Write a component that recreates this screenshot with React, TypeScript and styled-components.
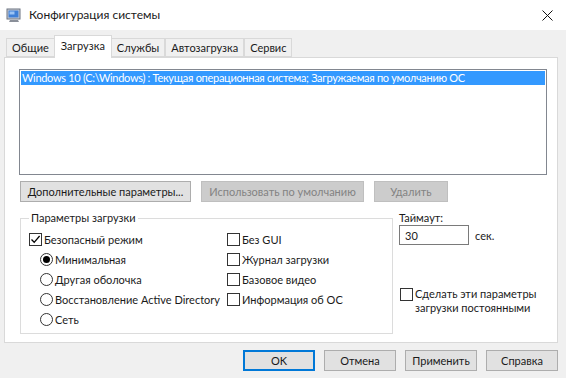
import React from "react";
import styled, { createGlobalStyle } from "styled-components";

const GlobalStyle = createGlobalStyle`
  html, body {
    margin: 0;
    padding: 0;
    background: #f0f0f0;
  }
  body {
    font-family: Lato, "Noto Sans", "Liberation Sans", sans-serif;
    font-size: 11px;
    color: #1a1a1a;
  }
  * {
    box-sizing: border-box;
  }
`;

const Window = styled.div`
  width: 566px;
  height: 378px;
  display: flex;
  flex-direction: column;
  background: #f0f0f0;
  overflow: hidden;
`;

const TitleBar = styled.div`
  height: 30px;
  background: #fff;
  display: flex;
  align-items: center;
  padding: 0 6px;
  gap: 7px;
`;

const Title = styled.div`
  flex: 1;
  font-size: 12px;
  padding-bottom: 2px;
`;

const CloseBox = styled.div`
  width: 30px;
  display: flex;
  justify-content: center;
  padding-left: 4px;
`;

const Body = styled.div`
  flex: 1;
  display: flex;
  flex-direction: column;
  padding: 5px 8px 0 4px;
`;

const Tabs = styled.div`
  display: flex;
  align-items: flex-end;
  height: 22px;
  padding-left: 2px;
  position: relative;
  z-index: 1;
`;

const Tab = styled.div<{ $active?: boolean }>`
  height: ${({ $active }) => ($active ? "23px" : "19px")};
  margin-bottom: ${({ $active }) => ($active ? "-1px" : "0")};
  margin-left: ${({ $active }) => ($active ? "-1px" : "0")};
  margin-right: ${({ $active }) => ($active ? "-1px" : "0")};
  padding: 0 ${({ $active }) => ($active ? "6px" : "5px")};
  background: ${({ $active }) => ($active ? "#fff" : "#f0f0f0")};
  border: 1px solid #d9d9d9;
  border-bottom: ${({ $active }) => ($active ? "none" : "1px solid #d9d9d9")};
  display: flex;
  align-items: center;
  padding-bottom: ${({ $active }) => ($active ? "3px" : "0")};
  white-space: nowrap;
  & + & {
    border-left: ${({ $active }) => ($active ? "1px solid #d9d9d9" : "none")};
  }
`;

const Panel = styled.div`
  height: 286px;
  background: #fff;
  border: 1px solid #d9d9d9;
  padding: 11px 10px 0 14px;
  display: flex;
  flex-direction: column;
`;

const ListBox = styled.div`
  height: 106px;
  border: 1px solid #828790;
  padding: 1px;
  background: #fff;
`;

const ListItem = styled.div<{ $selected?: boolean }>`
  height: 14px;
  line-height: 14px;
  padding-left: 1px;
  letter-spacing: -0.3px;
  background: ${({ $selected }) => ($selected ? "#3399ff" : "transparent")};
  color: ${({ $selected }) => ($selected ? "#fff" : "#000")};
  white-space: nowrap;
  overflow: hidden;
`;

const ButtonRow = styled.div`
  display: flex;
  gap: 10px;
  margin-top: 6px;
  padding-left: 1px;
`;

const Button = styled.div<{ $width: number; $disabled?: boolean; $default?: boolean }>`
  width: ${({ $width }) => $width}px;
  height: 21px;
  display: flex;
  align-items: center;
  justify-content: center;
  white-space: nowrap;
  background: ${({ $disabled }) => ($disabled ? "#cccccc" : "#e1e1e1")};
  color: ${({ $disabled }) => ($disabled ? "#838383" : "#1a1a1a")};
  border: ${({ $disabled, $default }) =>
    $default ? "2px solid #0078d7" : $disabled ? "1px solid #bfbfbf" : "1px solid #adadad"};
`;

const Lower = styled.div`
  display: flex;
  gap: 6px;
  margin-top: 8px;
  padding-left: 1px;
`;

const GroupBox = styled.fieldset`
  width: 373px;
  height: 124px;
  margin: 0;
  border: 1px solid #dcdcdc;
  padding: 3px 8px 0 8px;
  display: grid;
  grid-template-columns: 198px 1fr;
  align-content: start;
`;

const Legend = styled.legend`
  padding: 0 2px;
  margin-left: 0;
  line-height: 16px;
`;

const Column = styled.div`
  display: flex;
  flex-direction: column;
`;

const OptionRow = styled.div<{ $indent?: boolean }>`
  height: 20px;
  display: flex;
  align-items: center;
  gap: 2px;
  padding-left: ${({ $indent }) => ($indent ? "11px" : "0")};
  white-space: nowrap;
`;

const Box = styled.div`
  width: 13px;
  height: 13px;
  border: 1px solid #333;
  background: #fff;
  display: flex;
  align-items: center;
  justify-content: center;
  flex-shrink: 0;
`;

const Radio = styled.div`
  width: 13px;
  height: 13px;
  border: 1px solid #333;
  border-radius: 50%;
  background: #fff;
  display: flex;
  align-items: center;
  justify-content: center;
  flex-shrink: 0;
`;

const Dot = styled.div`
  width: 7px;
  height: 7px;
  border-radius: 50%;
  background: #000;
`;

const Side = styled.div`
  flex: 1;
  display: flex;
  flex-direction: column;
  padding-top: 1px;
`;

const TimeoutRow = styled.div`
  display: flex;
  align-items: center;
  gap: 6px;
  margin-top: 1px;
`;

const Input = styled.div`
  width: 70px;
  height: 20px;
  border: 1px solid #7a7a7a;
  padding-left: 5px;
  display: flex;
  align-items: center;
`;

const PermanentRow = styled.div`
  display: flex;
  align-items: flex-start;
  gap: 2px;
  margin-top: 43px;
  padding-left: 1px;
  white-space: nowrap;
`;

const PermanentText = styled.div`
  line-height: 14px;
  margin-top: -1px;
`;

const Footer = styled.div`
  display: flex;
  justify-content: flex-end;
  gap: 9px;
  padding-top: 7px;
  padding-right: 0;
`;

const Check = () => (
  <svg width="11" height="11" viewBox="0 0 11 11">
    <path d="M1.5 5.5 L4.2 8.3 L9.6 2" fill="none" stroke="#000" strokeWidth="1.3" />
  </svg>
);

const CheckBox = ({ checked }: { checked?: boolean }) => <Box>{checked && <Check />}</Box>;

const RadioButton = ({ checked }: { checked?: boolean }) => <Radio>{checked && <Dot />}</Radio>;

const AppIcon = () => (
  <svg width="16" height="15" viewBox="0 0 16 15">
    <rect x="1" y="1" width="13" height="10" fill="#c8ccd4" stroke="#6b7380" />
    <rect x="2.5" y="2.5" width="10" height="7" fill="#3f7fd6" />
    <rect x="3.5" y="3.5" width="5" height="3" fill="#9cc4f4" />
    <path d="M4 12 H12 L13 14 H3 Z" fill="#8a8f99" />
  </svg>
);

const CloseIcon = () => (
  <svg width="11" height="11" viewBox="0 0 11 11">
    <path d="M0.5 0.5 L10.5 10.5 M10.5 0.5 L0.5 10.5" stroke="#111" strokeWidth="1" />
  </svg>
);

const leftOptions = [
  { label: "Минимальная", checked: true },
  { label: "Другая оболочка" },
  { label: "Восстановление Active Directory" },
  { label: "Сеть" },
];

const rightOptions = ["Без GUI", "Журнал загрузки", "Базовое видео", "Информация  об ОС"];

export default function App() {
  return (
    <>
      <GlobalStyle />
      <Window>
        <TitleBar>
          <AppIcon />
          <Title>Конфигурация системы</Title>
          <CloseBox>
            <CloseIcon />
          </CloseBox>
        </TitleBar>
        <Body>
          <Tabs>
            <Tab>Общие</Tab>
            <Tab $active>Загрузка</Tab>
            <Tab>Службы</Tab>
            <Tab>Автозагрузка</Tab>
            <Tab>Сервис</Tab>
          </Tabs>
          <Panel>
            <ListBox>
              <ListItem $selected>
                Windows 10 (C:\Windows) : Текущая операционная система; Загружаемая по умолчанию ОС
              </ListItem>
            </ListBox>
            <ButtonRow>
              <Button $width={171}>Дополнительные параметры...</Button>
              <Button $width={163} $disabled>
                Использовать по умолчанию
              </Button>
              <Button $width={74} $disabled>
                Удалить
              </Button>
            </ButtonRow>
            <Lower>
              <GroupBox>
                <Legend>Параметры загрузки</Legend>
                <Column>
                  <OptionRow>
                    <CheckBox checked />
                    Безопасный режим
                  </OptionRow>
                  {leftOptions.map((o) => (
                    <OptionRow $indent key={o.label}>
                      <RadioButton checked={o.checked} />
                      {o.label}
                    </OptionRow>
                  ))}
                </Column>
                <Column>
                  {rightOptions.map((label) => (
                    <OptionRow key={label}>
                      <CheckBox />
                      {label}
                    </OptionRow>
                  ))}
                </Column>
              </GroupBox>
              <Side>
                <div>Таймаут:</div>
                <TimeoutRow>
                  <Input>30</Input>
                  <span>сек.</span>
                </TimeoutRow>
                <PermanentRow>
                  <CheckBox />
                  <PermanentText>
                    Сделать эти параметры
                    <br />
                    загрузки постоянными
                  </PermanentText>
                </PermanentRow>
              </Side>
            </Lower>
          </Panel>
          <Footer>
            <Button $width={72} $default>
              OK
            </Button>
            <Button $width={72}>Отмена</Button>
            <Button $width={72}>Применить</Button>
            <Button $width={72}>Справка</Button>
          </Footer>
        </Body>
      </Window>
    </>
  );
}
